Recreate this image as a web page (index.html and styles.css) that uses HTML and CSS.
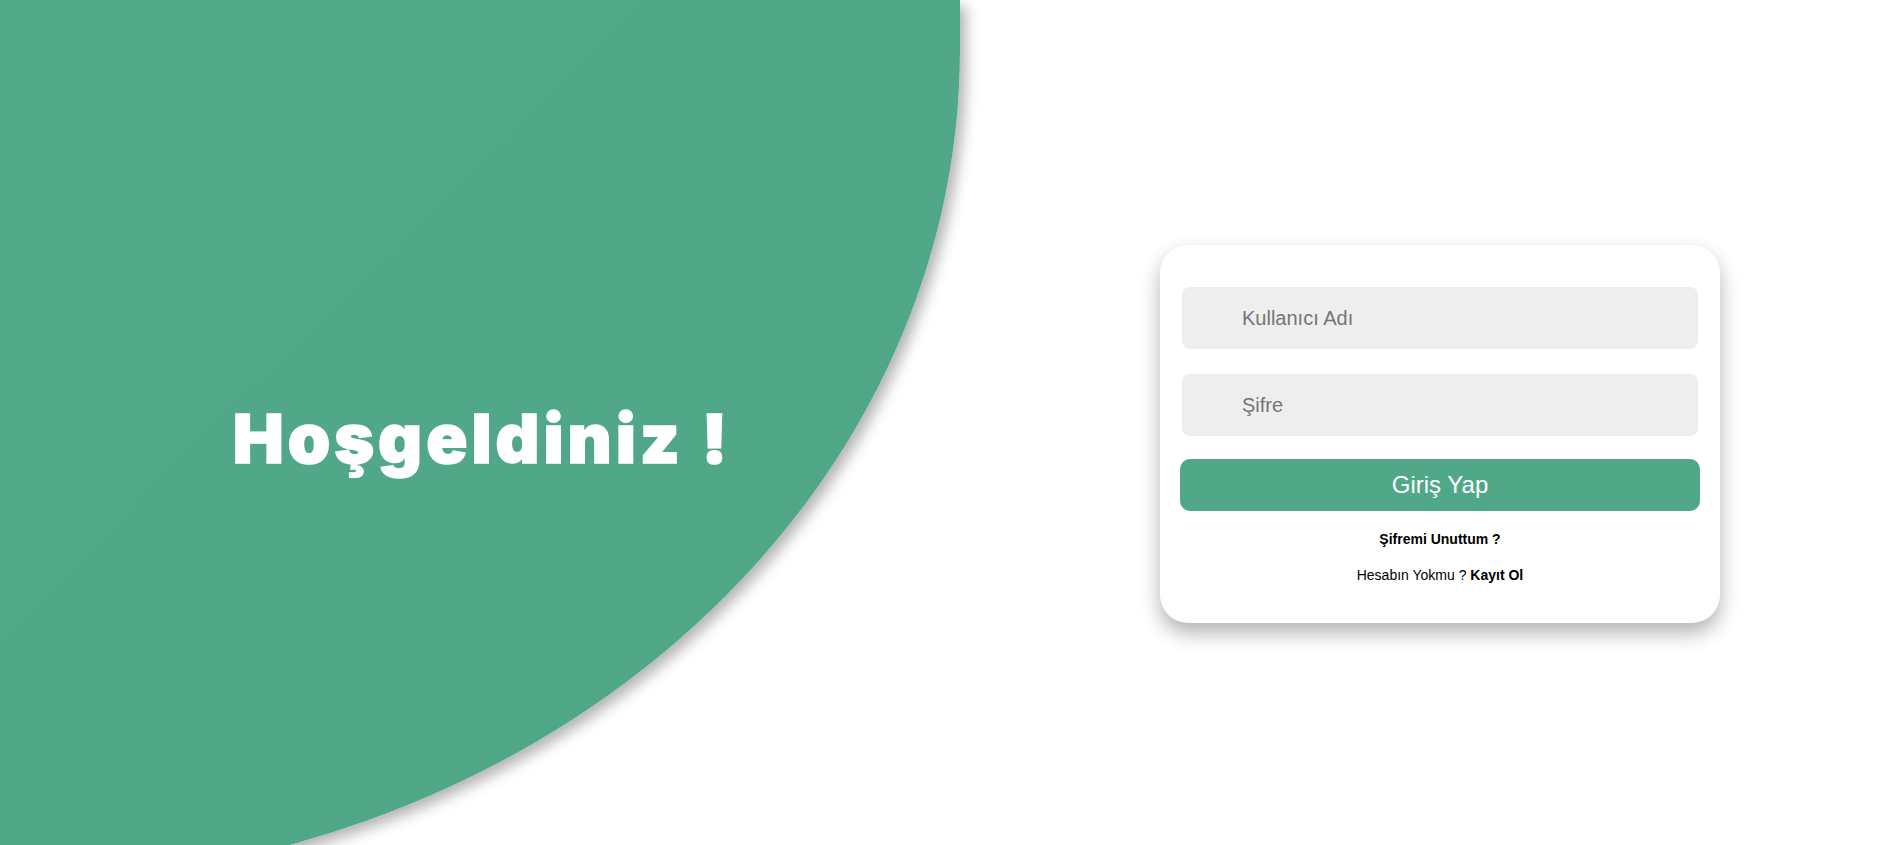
FILE: index.html
```html
<!DOCTYPE html>
<html lang="tr">
<head>
<meta charset="utf-8">
<title>Giriş</title>
<link rel="stylesheet" href="styles.css">
</head>
<body>
<main class="page">
  <section class="hero">
    <h1 class="hero-title">Hoşgeldiniz !</h1>
  </section>
  <section class="auth">
    <form class="card">
      <input class="field" type="text" placeholder="Kullanıcı Adı">
      <input class="field field-last" type="password" placeholder="Şifre">
      <button class="submit" type="button">Giriş Yap</button>
      <a class="forgot" href="#">Şifremi Unuttum ?</a>
      <p class="signup">Hesabın Yokmu ? <a class="signup-link" href="#">Kayıt Ol</a></p>
    </form>
  </section>
</main>
</body>
</html>
```

FILE: styles.css
```css
html, body {
  margin: 0;
  padding: 0;
  height: 100%;
  overflow: hidden;
  background: #ffffff;
}

body {
  font-family: "Liberation Sans", Arial, sans-serif;
  color: #000;
}

.page {
  display: flex;
  height: 884px;
}

.hero {
  flex: 0 0 960px;
  height: 884px;
  box-sizing: border-box;
  padding-bottom: 9px;
  background: linear-gradient(135deg, #52a98a 0%, #4fa786 100%);
  border-bottom-right-radius: 960px 834px;
  box-shadow: 6px 6px 14px rgba(0, 0, 0, 0.3);
  display: flex;
  align-items: center;
  justify-content: center;
  position: relative;
  z-index: 1;
}

.hero-title {
  margin: 0 0 0 4px;
  font-family: Inter, "Liberation Sans", sans-serif;
  font-weight: 900;
  font-size: 68px;
  line-height: 1;
  letter-spacing: 4px;
  -webkit-text-stroke: 1.5px #ffffff;
  color: #ffffff;
  white-space: nowrap;
}

.auth {
  flex: 1;
  box-sizing: border-box;
  padding: 0 0 16px 24px;
  display: flex;
  align-items: center;
  justify-content: center;
}

.card {
  width: 560px;
  box-sizing: border-box;
  padding: 42px 20px 40px;
  background: #ffffff;
  border-radius: 28px;
  box-shadow: 0 10px 20px rgba(0, 0, 0, 0.3);
  display: flex;
  flex-direction: column;
  align-items: center;
}

.field {
  align-self: stretch;
  box-sizing: border-box;
  height: 62px;
  margin: 0 2px 25px;
  padding: 0 0 0 60px;
  border: none;
  border-radius: 8px;
  background: #eeeeee;
  font-family: "Liberation Sans", Arial, sans-serif;
  font-size: 20px;
  color: #333;
  outline: none;
}

.field::placeholder {
  color: #757575;
}

.field-last {
  margin-bottom: 23px;
}

.submit {
  align-self: stretch;
  height: 52px;
  border: none;
  border-radius: 10px;
  background: #50a888;
  color: #ffffff;
  font-family: "Liberation Sans", Arial, sans-serif;
  font-size: 24px;
  cursor: pointer;
}

.forgot {
  margin-top: 20px;
  font-size: 14px;
  line-height: 16px;
  font-weight: bold;
  color: #000;
  text-decoration: none;
}

.signup {
  margin: 20px 0 0;
  font-size: 14px;
  line-height: 16px;
  color: #000;
}

.signup-link {
  font-weight: bold;
  color: #000;
  text-decoration: none;
}
```
